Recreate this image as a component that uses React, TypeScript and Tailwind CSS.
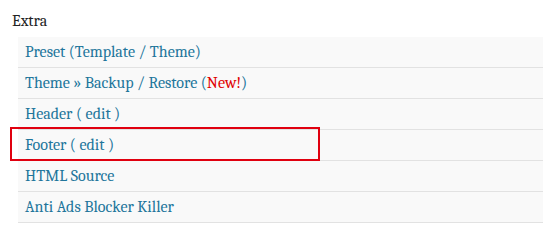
export default function App() {
    const row = "relative h-[31px] border-b border-[#e2e2e2] bg-[#f9f9f9] pl-[7px] leading-[30px] text-[#21759b]";
    return (
        <div className="bg-white pt-[10px] pb-[4px] font-serif text-[16px]">
            <div className="pl-[12px] leading-[22px] text-[#222]">Extra</div>
            <div className="mt-[5px] ml-[18px] flex flex-col">
                <div className={row}>Preset (Template / Theme)</div>
                <div className={row}>
                    Theme &raquo; Backup / Restore (<span className="text-[#e00000]">New!</span>)
                </div>
                <div className={row}>Header ( edit )</div>
                <div className={row}>
                    Footer ( edit )
                    <span className="absolute -top-[3px] -left-[8px] h-[34px] w-[310px] border-2 border-[#e0000f]" />
                </div>
                <div className={row}>HTML Source</div>
                <div className={row}>Anti Ads Blocker Killer</div>
            </div>
        </div>
    );
}
